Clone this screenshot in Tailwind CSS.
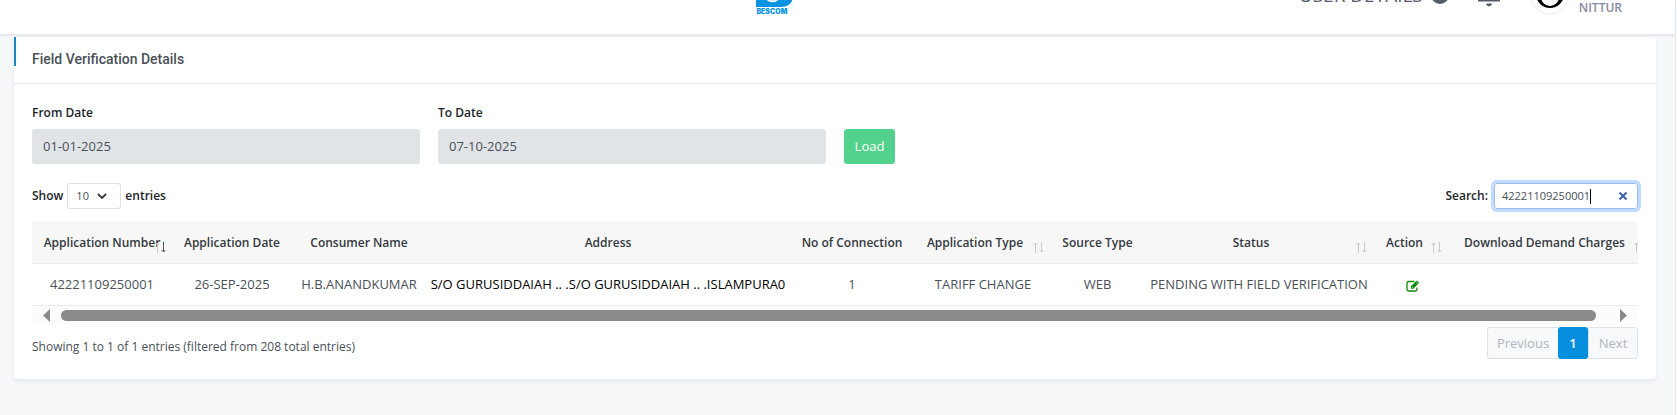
<!DOCTYPE html>
<html lang="en">
<head>
  <meta charset="UTF-8">
  <meta name="viewport" content="width=device-width, initial-scale=1.0">
  <title>BESCOM - Field Verification Details</title>
  <!-- Tailwind CSS CDN -->
  <script src="https://cdn.jsdelivr.net/npm/@tailwindcss/browser@4"></script>
</head>
<body class="min-h-screen bg-white pr-px font-['Open_Sans','Noto_Sans',sans-serif] text-[13px] leading-5 text-[#495057]">
  <div class="min-h-screen border-r border-[#e6e8eb] bg-[#f6f8fa]">

    <!-- Top bar -->
    <header class="flex h-[34px] items-start overflow-hidden bg-white shadow-[0_2px_3px_#e2e5ec]">
      <div class="flex flex-1 justify-center pl-[252px]">
        <a href="#" class="-mt-8 block" aria-label="Home">
          <svg class="block h-[39px] w-[38px]" viewBox="0 0 38 39" fill="none">
            <path d="M0 0h26c8 0 11 4 11 9v19c0 6-4 11-12 11H0z" fill="#0a93e2"/>
            <path d="M11 31c3 3 8 3 11 0" stroke="#fff" stroke-width="2"/>
          </svg>
          <span class="block font-['Inter',sans-serif] text-[7px] font-black leading-[9px] text-[#0a93e2]">BESCOM</span>
        </a>
      </div>
      <div class="flex items-start pr-[53px] text-[#555b6d]">
        <a href="#" class="-mt-[19px] flex items-center gap-2 text-[19px] leading-7 font-normal">
          USER DETAILS
          <svg class="size-[18px]" viewBox="0 0 18 18"><circle cx="9" cy="9" r="9" fill="#555b6d"/></svg>
        </a>
        <button type="button" class="-mt-4 ml-[28px]" aria-label="Notifications">
          <svg class="h-[23px] w-6" viewBox="0 0 24 23" fill="none" stroke="#555b6d" stroke-width="2">
            <path d="M1 16.500h22M4 16V8a8 8 0 0 1 16 0v8"/>
            <path d="M9.500 20c1 2.500 4 2.500 5 0z" fill="#555b6d" stroke-width="1"/>
          </svg>
        </button>
        <a href="#" class="-mt-6 ml-[29px] flex items-end gap-[9px] text-xs font-semibold text-[#8489a0]">
          <svg class="size-10" viewBox="0 0 40 40" fill="none">
            <circle cx="20" cy="19" r="19" fill="#fff" stroke="#e9ebee"/>
            <circle cx="20" cy="18" r="14" fill="#000"/>
            <ellipse cx="20" cy="21" rx="9" ry="9" fill="#fff"/>
          </svg>
          NITTUR
        </a>
      </div>
    </header>

    <main class="ml-[14px] mr-[19px] mt-[3px] rounded-sm bg-white shadow-[0_2px_4px_#e2e6ee]">
      <div class="flex h-[47px] items-start border-b border-[#e9ebee]">
        <span class="h-[29px] w-[2px] bg-[#1c84c6]"></span>
        <h1 class="pl-4 pt-3 font-['Roboto',sans-serif] text-sm font-medium leading-5">Field Verification Details</h1>
      </div>

      <div class="px-[18px] pb-5 pt-[19px]">
        <!-- Date filter -->
        <form class="flex items-end gap-[18px]">
          <div class="w-[388px]">
            <label for="fromDate" class="mb-[6px] block text-xs leading-5 font-semibold text-[#212529]">From Date</label>
            <input type="text" id="fromDate" value="01-01-2025" readonly class="block h-[35px] w-full rounded-[3px] bg-[#e1e4e7] px-[11px] pb-px">
          </div>
          <div class="w-[388px]">
            <label for="toDate" class="mb-[6px] block text-xs leading-5 font-semibold text-[#212529]">To Date</label>
            <input type="text" id="toDate" value="07-10-2025" readonly class="block h-[35px] w-full rounded-[3px] bg-[#e1e4e7] px-[11px] pb-px">
          </div>
          <button type="button" class="h-[35px] w-[51px] rounded-[3px] bg-[#52d28c] pb-px text-white">Load</button>
        </form>

        <!-- Table controls -->
        <div class="mt-[19px] flex items-center justify-between text-xs font-semibold text-[#212529]">
          <label class="flex items-center gap-1">
            Show
            <span class="relative">
              <select class="block h-[26px] w-[54px] appearance-none rounded-[3px] border border-[#dcdfe3] px-2 text-[11px] font-normal text-[#495057]">
                <option>10</option>
                <option>25</option>
                <option>50</option>
                <option>100</option>
              </select>
              <svg class="pointer-events-none absolute right-[14px] top-[10px] h-[7px] w-[10px]" viewBox="0 0 10 7" fill="none" stroke="#343a40" stroke-width="1.800"><path d="M1 1l4 4 4-4"/></svg>
            </span>
            entries
          </label>
          <div class="flex items-center gap-[6px]">
            <label for="search">Search:</label>
            <div class="flex h-[26px] w-[144px] items-center rounded-[3px] border border-[#9dbbe8] pl-[7px] pr-[10px] ring-3 ring-[#bfdcff]">
              <input type="text" id="search" value="42221109250001" class="field-sizing-content text-[11px] font-normal text-[#495057] outline-none">
              <span class="h-[15px] w-px bg-black"></span>
              <button type="button" class="ml-auto" aria-label="Clear search">
                <svg class="size-2" viewBox="0 0 8 8" stroke="#3c5fa5" stroke-width="2"><path d="M.5 .5l7 7M7.500 .5l-7 7"/></svg>
              </button>
            </div>
          </div>
        </div>

        <!-- Results -->
        <div class="mt-3 overflow-hidden">
          <table class="w-full min-w-[1623px] table-fixed whitespace-nowrap text-center">
            <colgroup>
              <col class="w-[140px]">
              <col class="w-[120px]">
              <col class="w-[134px]">
              <col>
              <col class="w-[124px]">
              <col class="w-[138px]">
              <col class="w-[91px]">
              <col class="w-[232px]">
              <col class="w-[75px]">
              <col class="w-[205px]">
            </colgroup>
            <thead class="bg-[#f7f7f7] text-xs text-[#343a40]">
              <tr class="h-[42px] border-b border-[#e9ebee]">
                <th class="relative pt-[3px] font-semibold">Application Number
                  <svg class="absolute bottom-[10px] right-[6px] h-[11px] w-[11px]" viewBox="0 0 11 11" fill="none" stroke-width="1"><path d="M2.500 11V1M.5 3l2-2 2 2" stroke="#c8cacc"/><path d="M8.500 0v10M6.500 8l2 2 2-2" stroke="#555"/></svg>
                </th>
                <th class="pt-[3px] font-semibold">Application Date</th>
                <th class="pt-[3px] font-semibold">Consumer Name</th>
                <th class="pt-[3px] font-semibold">Address</th>
                <th class="pt-[3px] font-semibold">No of Connection</th>
                <th class="relative pt-[3px] pr-4 font-semibold">Application Type
                  <svg class="absolute bottom-[10px] right-2 h-[11px] w-[11px]" viewBox="0 0 11 11" fill="none" stroke="#c8cacc"><path d="M2.500 11V1M.5 3l2-2 2 2M8.500 0v10M6.500 8l2 2 2-2"/></svg>
                </th>
                <th class="pt-[3px] font-semibold">Source Type</th>
                <th class="relative pt-[3px] pr-4 font-semibold">Status
                  <svg class="absolute bottom-[10px] right-2 h-[11px] w-[11px]" viewBox="0 0 11 11" fill="none" stroke="#c8cacc"><path d="M2.500 11V1M.5 3l2-2 2 2M8.500 0v10M6.500 8l2 2 2-2"/></svg>
                </th>
                <th class="relative pt-[3px] pr-4 font-semibold">Action
                  <svg class="absolute bottom-[10px] right-2 h-[11px] w-[11px]" viewBox="0 0 11 11" fill="none" stroke="#c8cacc"><path d="M2.500 11V1M.5 3l2-2 2 2M8.500 0v10M6.500 8l2 2 2-2"/></svg>
                </th>
                <th class="relative pt-[3px] pr-4 font-semibold">Download Demand Charges
                  <svg class="absolute bottom-[10px] right-[10px] h-[11px] w-[11px]" viewBox="0 0 11 11" fill="none" stroke="#c8cacc"><path d="M2.500 11V1M.5 3l2-2 2 2M8.500 0v10M6.500 8l2 2 2-2"/></svg>
                </th>
              </tr>
            </thead>
            <tbody>
              <tr class="h-[42px] border-b border-[#e9ebee]">
                <td>42221109250001</td>
                <td>26-SEP-2025</td>
                <td>H.B.ANANDKUMAR</td>
                <td class="text-black">S/O GURUSIDDAIAH .. .S/O GURUSIDDAIAH .. .ISLAMPURA0</td>
                <td>1</td>
                <td>TARIFF CHANGE</td>
                <td>WEB</td>
                <td>PENDING WITH FIELD VERIFICATION</td>
                <td>
                  <a href="#" class="inline-block align-middle" aria-label="Edit">
                    <svg class="block h-3 w-[14px]" viewBox="0 0 14 12" fill="none" stroke="#078a07">
                      <path d="M8.500 1.500H2.500a1.500 1.500 0 0 0-1.500 1.500v6.500A1.500 1.500 0 0 0 2.500 11h7a1.500 1.500 0 0 0 1.500-1.500V7.500" stroke-width="1.300"/>
                      <path d="M5 8.800V6.300L10.800.5l2.400 2.300L7.400 8.800z" fill="#078a07" stroke="none"/>
                      <path d="M6 6.800l1.200 1.200M10 1.800l2 2" stroke="#fff" stroke-width=".6"/>
                    </svg>
                  </a>
                </td>
                <td></td>
              </tr>
            </tbody>
          </table>

          <!-- Horizontal scrollbar -->
          <div class="flex h-[19px] items-center bg-[#fcfcfc] px-[11px]">
            <svg class="h-[13px] w-[7px]" viewBox="0 0 7 13" fill="#8a8a8a"><path d="M7 0v13L0 6.500z"/></svg>
            <div class="ml-[11px] mr-6 h-[11px] flex-1 rounded-full bg-[#8a8a8a]"></div>
            <svg class="h-[13px] w-[7px]" viewBox="0 0 7 13" fill="#8a8a8a"><path d="M0 0v13l7-6.500z"/></svg>
          </div>
        </div>

        <div class="mt-[2px] flex items-start justify-between">
          <p class="pt-[10px] text-xs leading-5">Showing 1 to 1 of 1 entries (filtered from 208 total entries)</p>
          <nav class="flex h-8 text-[#adb5bd]" aria-label="Pagination">
            <button type="button" disabled class="w-[71px] rounded-l-[3px] border border-r-0 border-[#dee2e6] bg-[#f8f9fb]">Previous</button>
            <button type="button" class="w-[30px] rounded-[3px] bg-[#068fdd] font-semibold text-white">1</button>
            <button type="button" disabled class="w-[50px] rounded-r-[3px] border border-[#dee2e6] bg-[#f8f9fb]">Next</button>
          </nav>
        </div>
      </div>
    </main>
  </div>
</body>
</html>
